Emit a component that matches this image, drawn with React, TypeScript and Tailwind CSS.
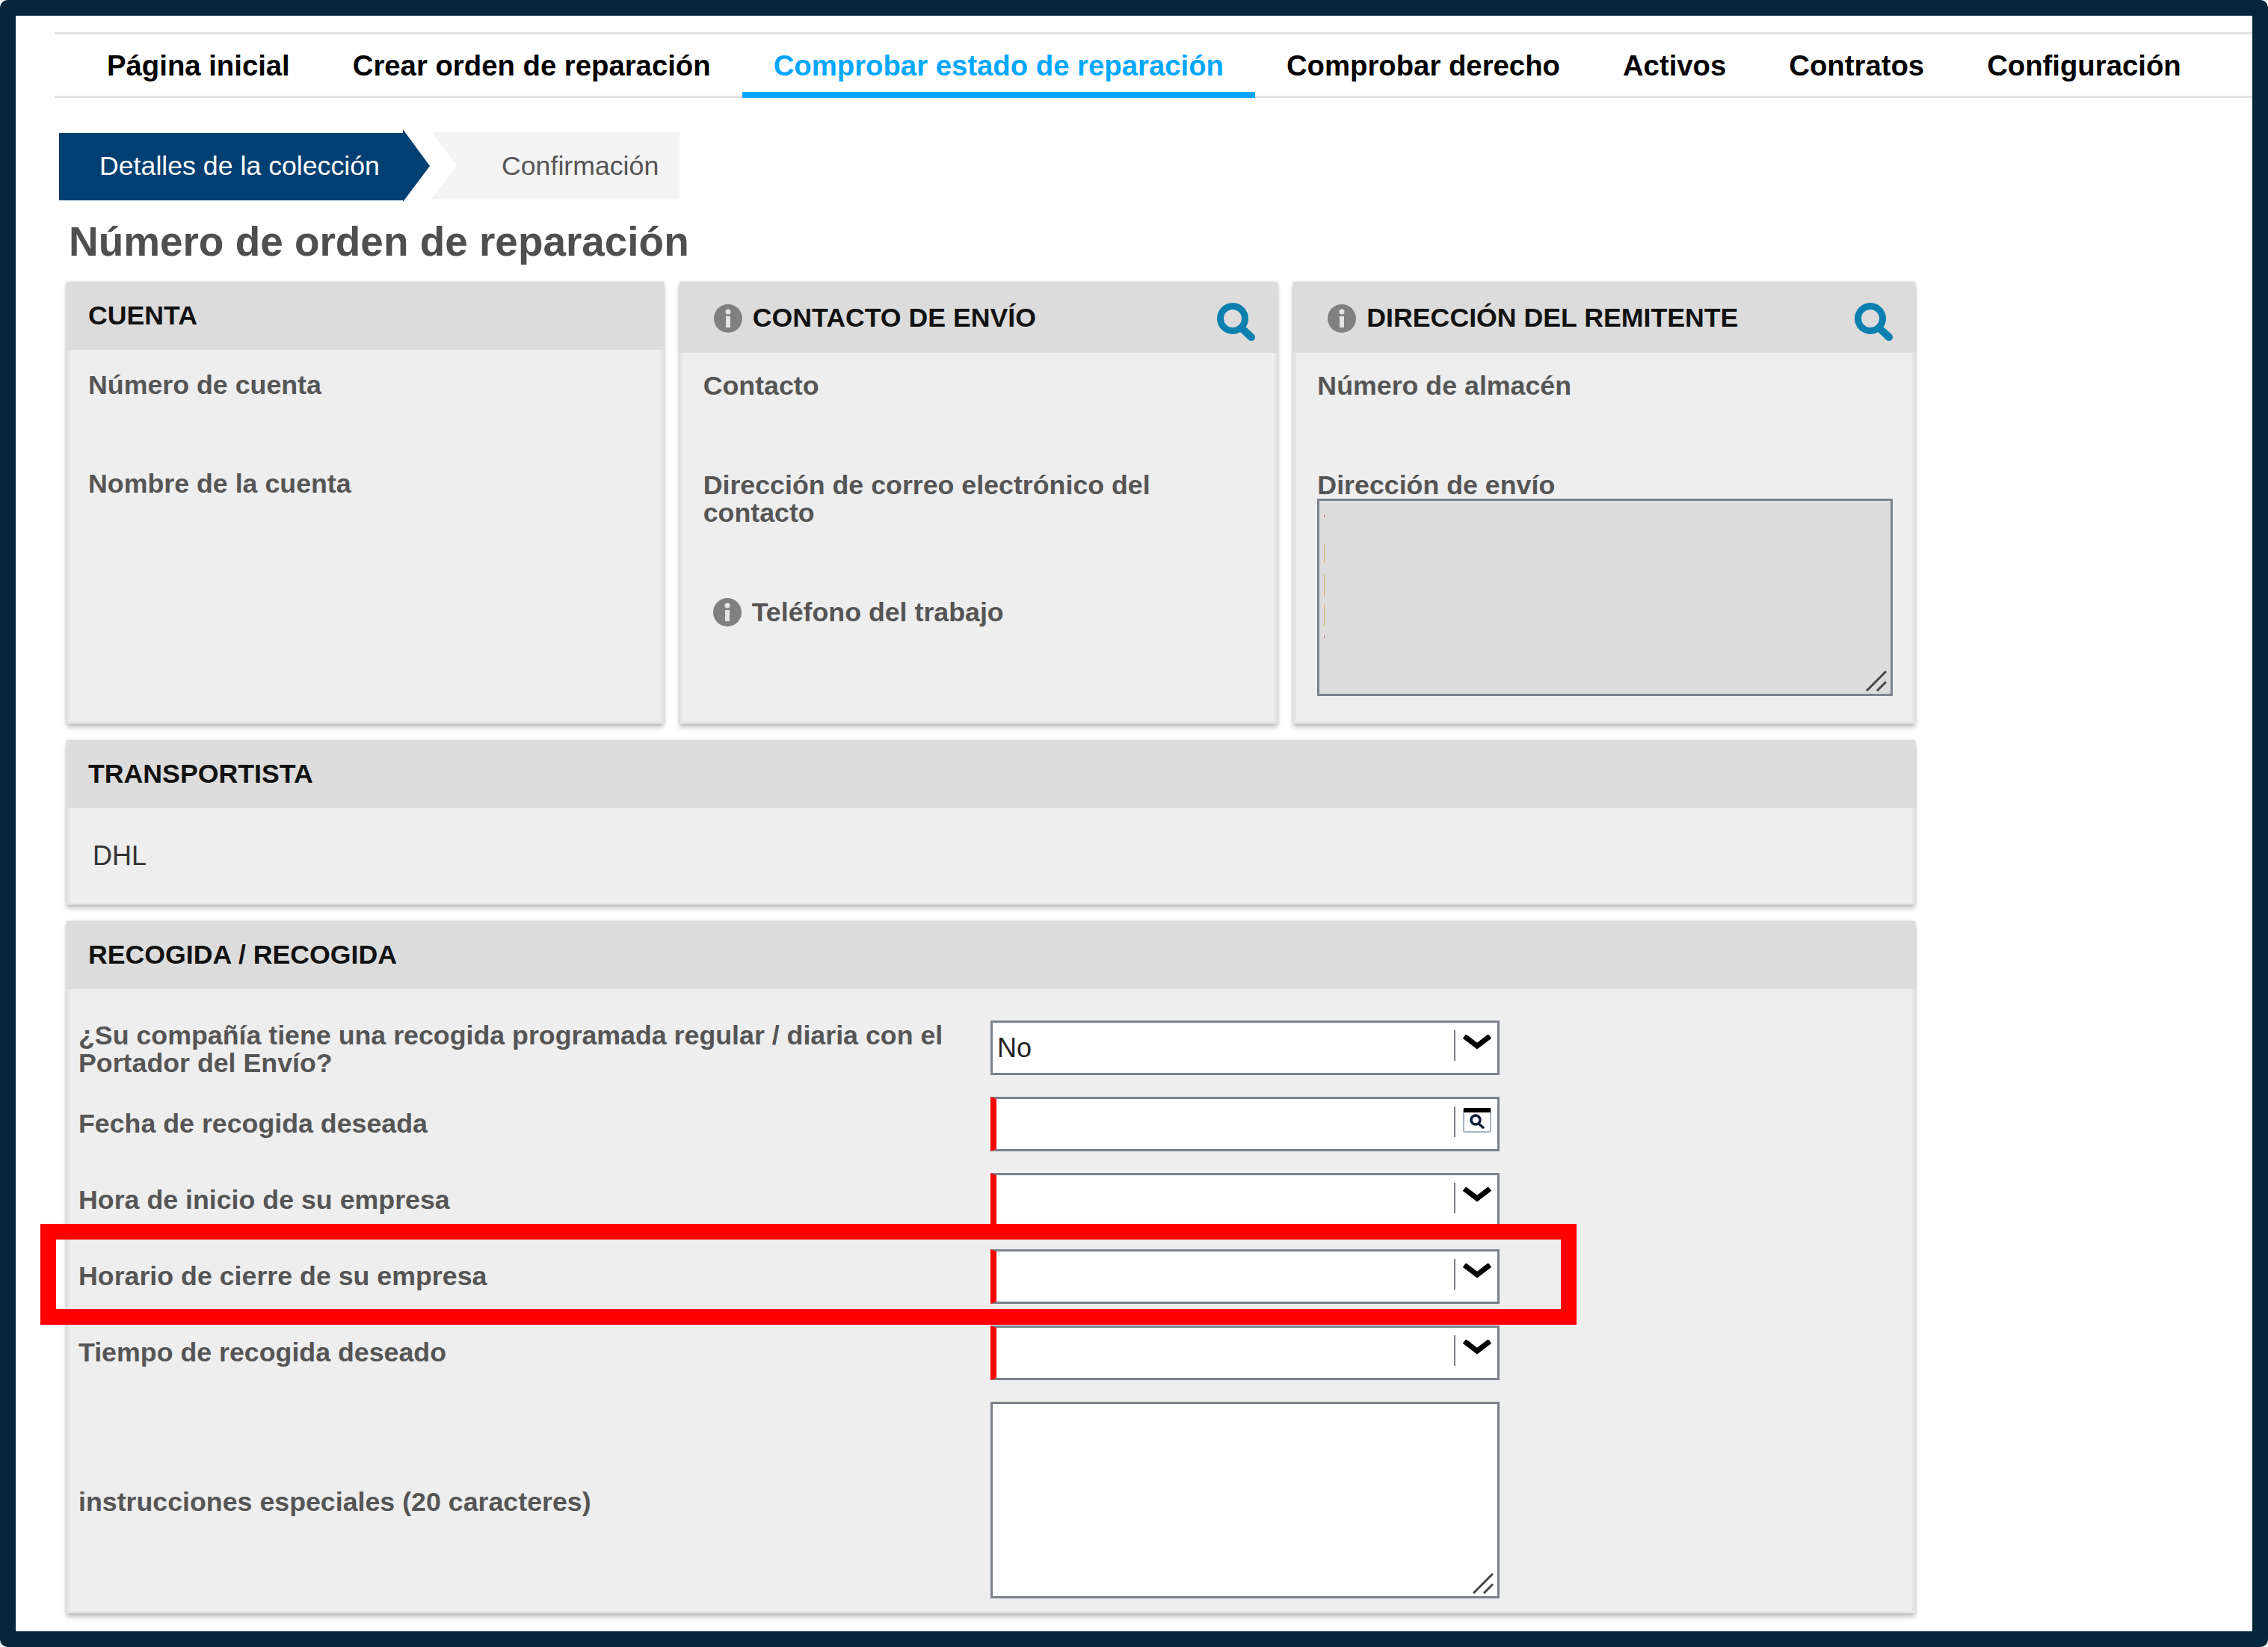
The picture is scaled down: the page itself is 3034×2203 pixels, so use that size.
import type { ReactNode } from "react";

const navItems = [
  { label: "Página inicial" },
  { label: "Crear orden de reparación" },
  { label: "Comprobar estado de reparación", active: true },
  { label: "Comprobar derecho" },
  { label: "Activos" },
  { label: "Contratos" },
  { label: "Configuración" },
];

function InfoIcon() {
  return (
    <svg width="38" height="38" viewBox="0 0 38 38" className="shrink-0">
      <circle cx="19" cy="19" r="19" fill="#808080" />
      <circle cx="19" cy="10" r="3.5" fill="#e4e4e4" />
      <rect x="16" y="16" width="6" height="15" fill="#e4e4e4" />
    </svg>
  );
}

function SearchIcon() {
  return (
    <svg width="53" height="51" viewBox="0 0 53 51" fill="none" className="shrink-0">
      <circle cx="22" cy="21" r="16.5" stroke="#0a7fb0" strokeWidth="9" />
      <line x1="34" y1="34" x2="47" y2="46" stroke="#0a7fb0" strokeWidth="10" strokeLinecap="round" />
    </svg>
  );
}

function Chevron() {
  return (
    <svg width="38" height="20" viewBox="0 0 38 20" fill="none">
      <path d="M2 2 L19 15 L36 2" stroke="#000" strokeWidth="7" />
    </svg>
  );
}

function CalendarIcon() {
  return (
    <svg width="38" height="33" viewBox="0 0 38 33" fill="none">
      <rect x="1" y="1" width="36" height="31" rx="2" fill="#fff" stroke="#a9b4bf" strokeWidth="2" />
      <rect x="1" y="0" width="36" height="6" fill="#000" />
      <circle cx="17" cy="16" r="6" stroke="#0b1b33" strokeWidth="3.5" />
      <line x1="21" y1="21" x2="28" y2="27" stroke="#0b1b33" strokeWidth="3.5" />
    </svg>
  );
}

function Grip() {
  return (
    <svg width="28" height="28" viewBox="0 0 28 28" fill="none">
      <line x1="1" y1="27" x2="27" y2="1" stroke="#444" strokeWidth="3" />
      <line x1="15" y1="27" x2="27" y2="15" stroke="#444" strokeWidth="3" />
    </svg>
  );
}

function Panel({
  title,
  icons,
  tall,
  className,
  children,
}: {
  title: string;
  icons?: boolean;
  tall?: boolean;
  className: string;
  children: ReactNode;
}) {
  return (
    <div
      className={`flex flex-col bg-[#eeeeee] border-x-[4px] border-b-[3px] border-[#e5e5e5] shadow-[0_5px_6px_rgba(0,0,0,0.22),0_0_4px_rgba(0,0,0,0.15)] ${className}`}
    >
      <div
        className={`-mx-[4px] flex items-center bg-[#dcdcdc] shrink-0 text-[35.7px] font-bold text-[#111] ${
          tall ? "h-[95px] pt-[3px]" : "h-[91px]"
        } ${icons ? "pl-[46px] pr-[29px]" : "pl-[29px]"}`}
      >
        {icons && <InfoIcon />}
        <span className={icons ? "ml-[14px]" : ""}>{title}</span>
        {icons && (
          <span className="ml-auto mt-[8px]">
            <SearchIcon />
          </span>
        )}
      </div>
      {children}
    </div>
  );
}

function Field({ required, value, calendar }: { required?: boolean; value?: string; calendar?: boolean }) {
  return (
    <div
      className={`flex items-start w-[681px] h-[73px] bg-white border-[3px] border-[#7c828b] text-[36px] font-normal text-[#222] ${
        required ? "border-l-[8px] border-l-[#ff0000]" : ""
      }`}
    >
      <span className="pl-[6px] pt-[2px] self-center leading-none">{value}</span>
      <span className="ml-auto mt-[10px] w-[2px] h-[41px] bg-[#7c828b]" />
      <span className={`ml-[10px] mr-[8px] w-[38px] ${calendar ? "mt-[12px]" : "mt-[16px]"}`}>
        {calendar ? <CalendarIcon /> : <Chevron />}
      </span>
    </div>
  );
}

function FormRow({ label, labelClass, children }: { label: string; labelClass?: string; children: ReactNode }) {
  return (
    <div className="flex items-center">
      <div className={`w-[1220px] pr-[30px] text-[35.75px] font-bold leading-[37px] text-[#555] ${labelClass ?? ""}`}>
        {label}
      </div>
      {children}
    </div>
  );
}

export default function App() {
  return (
    <div className="relative box-border w-[3034px] h-[2203px] bg-white border-[21px] border-[#04253a] rounded-[10px] overflow-hidden font-['Liberation_Sans',Arial,sans-serif]">
      <nav className="ml-[52px] mt-[22px] h-[88px] flex border-y-[3px] border-[#e2e2e2] pl-[28px] text-[38.3px] font-bold text-black">
        {navItems.map((item) => (
          <div
            key={item.label}
            className={`flex items-center px-[42px] h-[85px] whitespace-nowrap pt-[6px] border-b-[8px] ${
              item.active ? "border-[#00a7ff] text-[#00a7ff]" : "border-transparent"
            }`}
          >
            {item.label}
          </div>
        ))}
      </nav>

      <div className="ml-[58px] mt-[42px] flex items-center h-[97px] text-[35.7px]">
        <div className="w-[496px] h-[97px] flex items-center pl-[54px] pt-[3px] bg-[#003f72] text-white [clip-path:polygon(0_5px,460px_5px,460px_0,496px_49px,460px_97px,460px_95px,0_95px)]">
          Detalles de la colección
        </div>
        <div className="ml-[2px] w-[332px] h-[90px] flex items-center pl-[94px] pt-[3px] bg-[#f4f4f4] text-[#555] [clip-path:polygon(0_0,100%_0,100%_100%,0_100%,34px_50%)]">
          Confirmación
        </div>
      </div>

      <h1 className="ml-[71px] mt-[23px] text-[54.9px] leading-[60px] font-bold text-[#4f4f4f]">
        Número de orden de reparación
      </h1>

      <div className="ml-[68px] mt-[24px] w-[2473px] flex flex-col text-[35.75px] font-bold text-[#555]">
        <div className="flex gap-[21px] h-[591px]">
          <Panel title="CUENTA" className="w-[799px]">
            <div className="pl-[25px] pt-[27px] flex flex-col gap-[91px] leading-[41px]">
              <div>Número de cuenta</div>
              <div>Nombre de la cuenta</div>
            </div>
          </Panel>
          <Panel title="CONTACTO DE ENVÍO" icons tall className="w-[801px]">
            <div className="pl-[28px] pr-[100px] pt-[26px] flex flex-col leading-[37px]">
              <div className="h-[133px]">Contacto</div>
              <div className="h-[169px]">Dirección de correo electrónico del contacto</div>
              <div className="flex items-center gap-[14px] pl-[13px]">
                <InfoIcon />
                Teléfono del trabajo
              </div>
            </div>
          </Panel>
          <Panel title="DIRECCIÓN DEL REMITENTE" icons tall className="w-[832px]">
            <div className="pl-[28px] pt-[26px] flex flex-col leading-[37px]">
              <div className="h-[133px]">Número de almacén</div>
              <div className="h-[36px]">Dirección de envío</div>
              <div className="relative w-[770px] h-[264px] bg-[#dcdcdc] border-[3px] border-[#7c828b] pl-[6px] pt-[19px] flex flex-col">
                <span className="w-[1px] h-[3px] mb-[36px] bg-[#b06a40]" />
                <span className="w-[1px] h-[25px] mb-[15px] bg-[#d9b070]" />
                <span className="w-[1px] h-[30px] mb-[10px] bg-[#d9b070]" />
                <span className="w-[1px] h-[30px] mb-[12px] bg-[#d9b070]" />
                <span className="w-[1px] h-[3px] bg-[#b06a40]" />
                <span className="absolute right-[5px] bottom-[3px]">
                  <Grip />
                </span>
              </div>
            </div>
          </Panel>
        </div>

        <Panel title="TRANSPORTISTA" className="mt-[22px] h-[220px]">
          <div className="pl-[31px] pt-[43px] font-normal text-[36px] text-[#333] leading-[41px]">DHL</div>
        </Panel>

        <Panel title="RECOGIDA / RECOGIDA" className="mt-[22px] h-[926px]">
          <div className="pl-[12px] pt-[41px] flex flex-col gap-[29px]">
            <FormRow
              labelClass="translate-y-[3px]"
              label="¿Su compañía tiene una recogida programada regular / diaria con el Portador del Envío?"
            >
              <Field value="No" />
            </FormRow>
            <FormRow label="Fecha de recogida deseada">
              <Field required calendar />
            </FormRow>
            <FormRow label="Hora de inicio de su empresa">
              <Field required />
            </FormRow>
            <FormRow label="Horario de cierre de su empresa">
              <Field required />
            </FormRow>
            <FormRow label="Tiempo de recogida deseado">
              <Field required />
            </FormRow>
            <FormRow labelClass="translate-y-[3px]" label="instrucciones especiales (20 caracteres)">
              <div className="relative w-[681px] h-[263px] bg-white border-[3px] border-[#7c828b]">
                <span className="absolute right-[5px] bottom-[3px]">
                  <Grip />
                </span>
              </div>
            </FormRow>
          </div>
        </Panel>
      </div>

      {/* red highlight drawn over the closing time row */}
      <div className="absolute left-[33px] top-[1616px] w-[2055px] h-[135px] border-[21px] border-[#ff0000]" />
    </div>
  );
}
